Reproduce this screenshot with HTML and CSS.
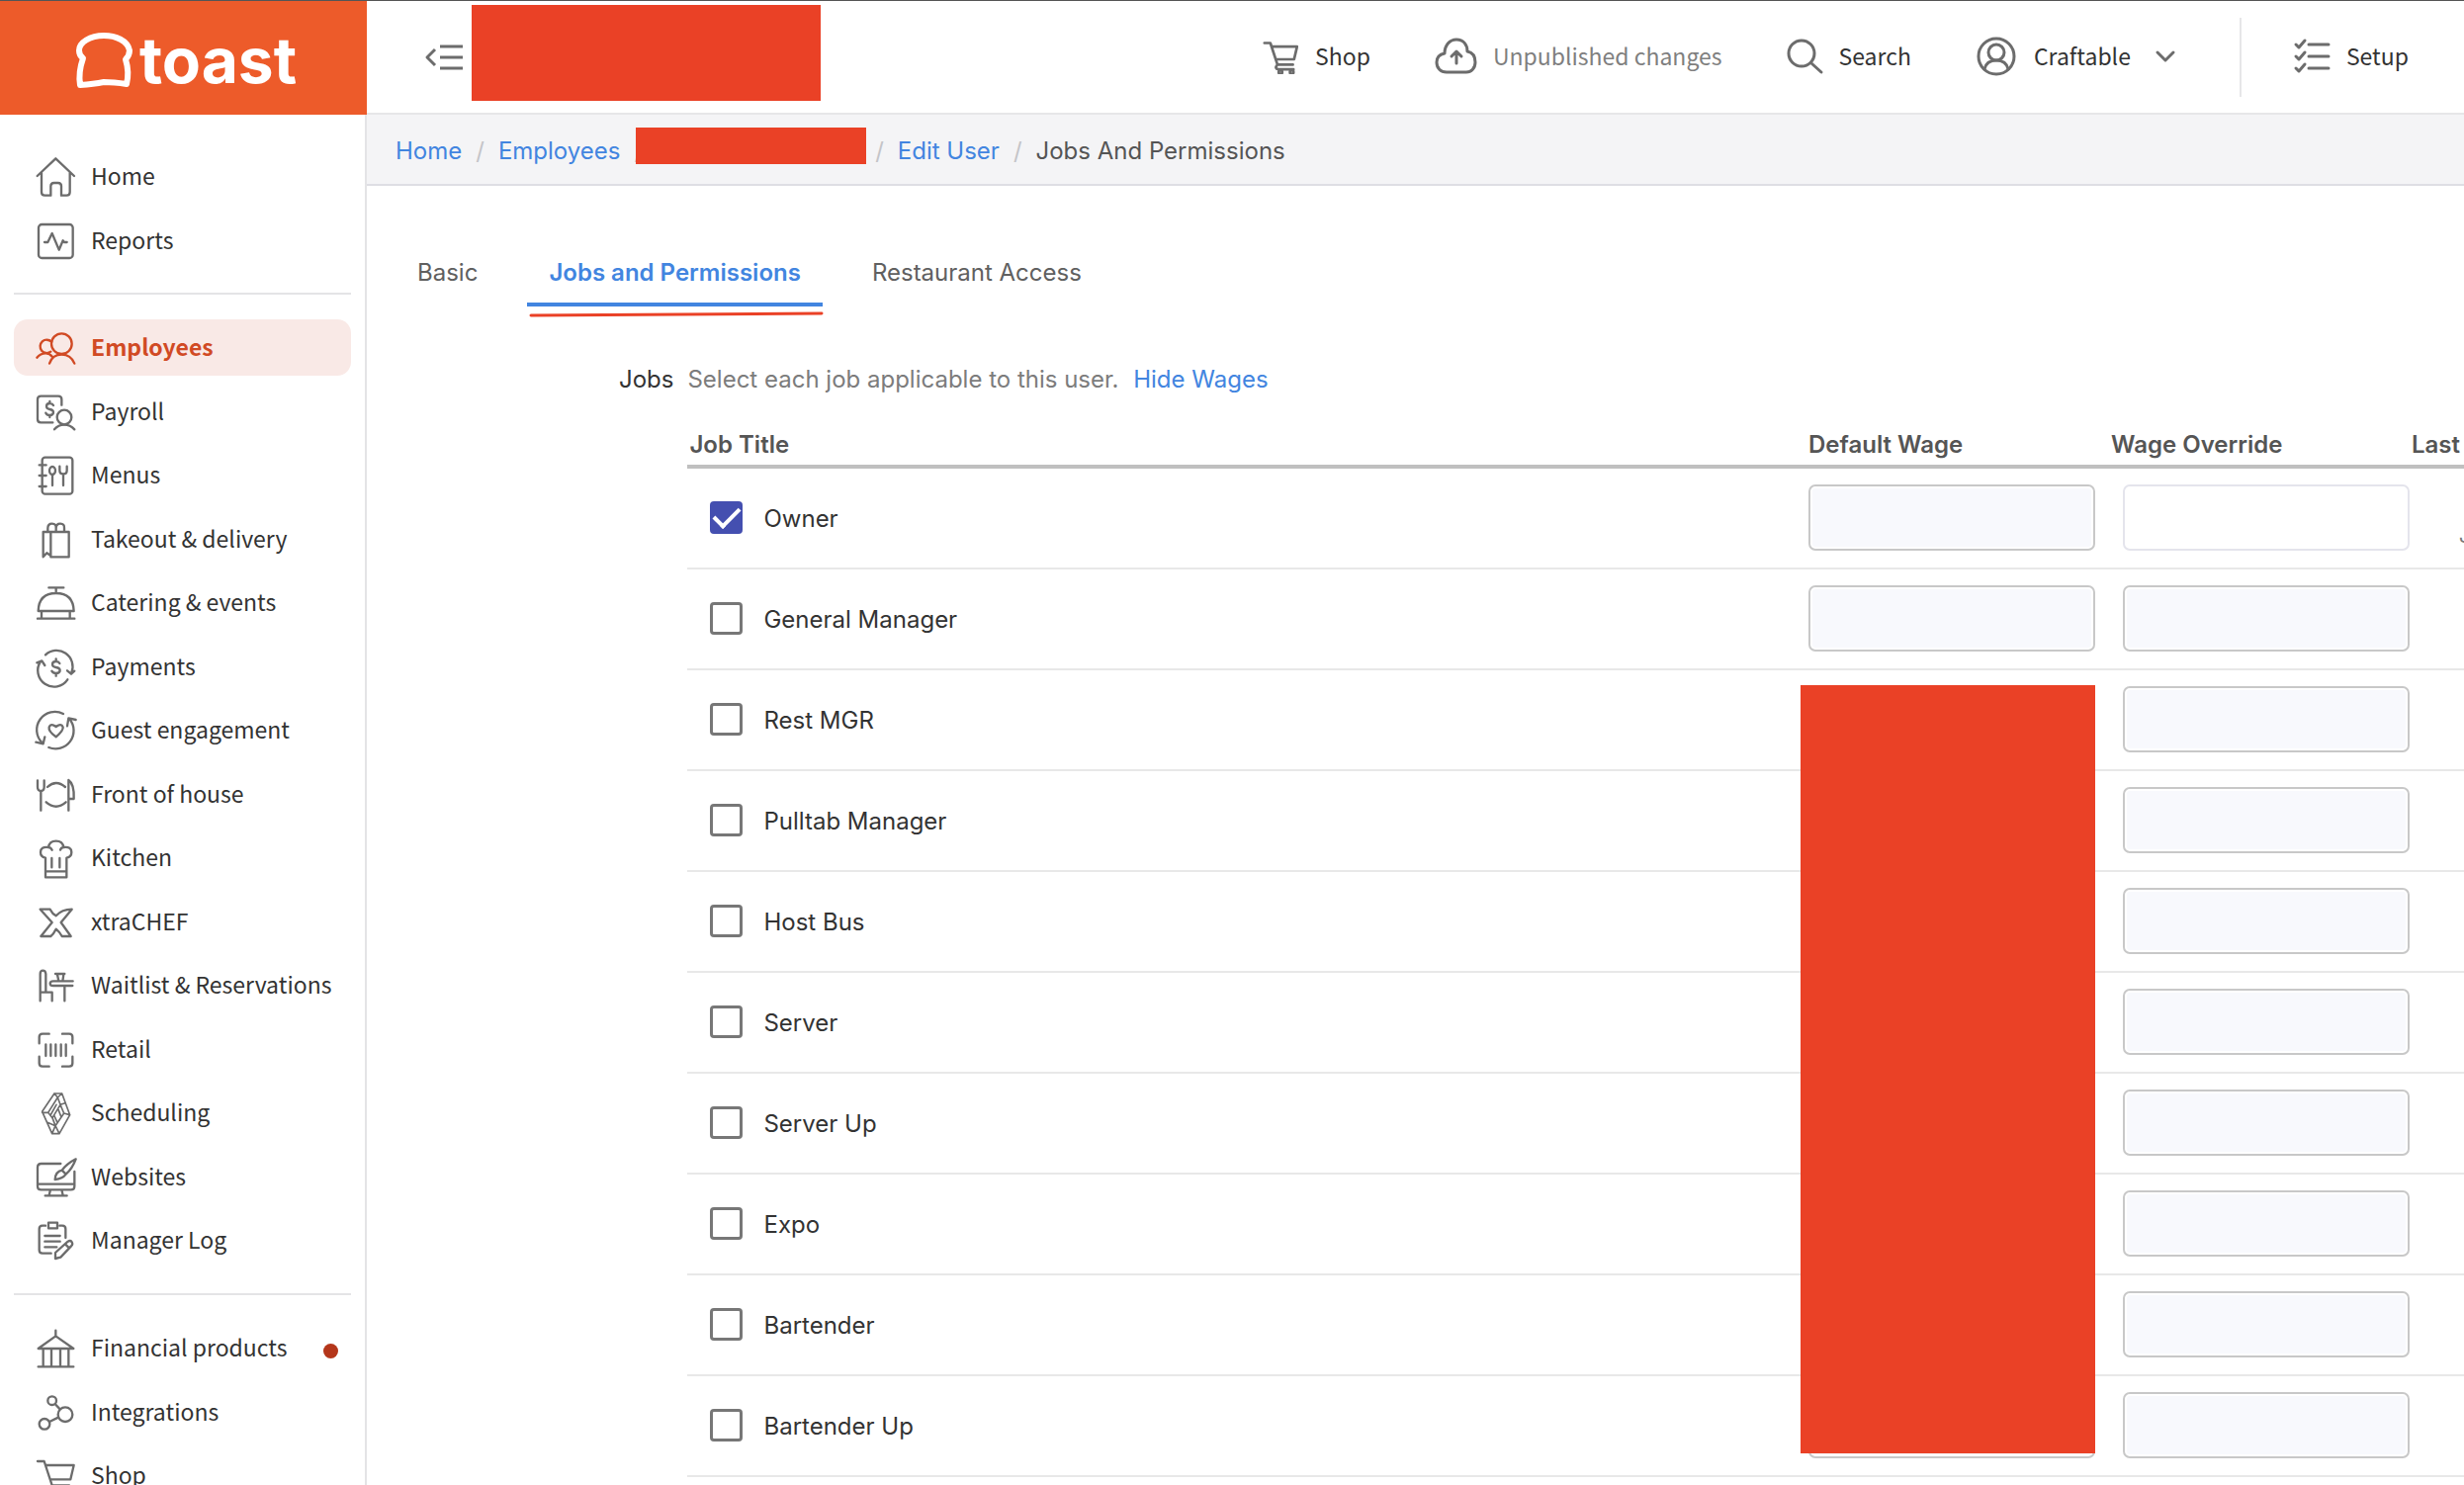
FILE: index.html
```html
<!DOCTYPE html>
<html lang="en">
<head>
<meta charset="utf-8">
<title>Jobs And Permissions</title>
<link rel="stylesheet" href="styles.css">
</head>
<body>
<svg class="sprite" aria-hidden="true">
  <symbol id="cart" viewBox="0 0 120 120"><path d="M6 15H26L50 88H102M33 27H116L106 70H46M50 88q-12 14 4 16H104"/><circle cx="60" cy="113" r="6"/><circle cx="98" cy="113" r="6"/></symbol>
</svg>
<div class="app">
  <aside class="sidebar">
    <a class="brand" href="#" aria-label="Toast home">
      <svg viewBox="0 0 60 60"><path d="M30 5C16 5 5 12 5 20q0 5 4 8Q4 42 6 55q14-1 24-3 10 0 23 2 3-12-1-25 4-4 4-9C54 10 42 5 30 5z"/></svg>
      <span>toast</span>
    </a>
    <nav class="nav" aria-label="Main">
      <ul>
        <li><a href="#"><svg viewBox="0 0 120 120"><path d="M5 57L61 4l56 53M18 48v58q0 10 10 10H46V88q0-10 10-10h12q10 0 10 10v28h16q10 0 10-10V48"/></svg>Home</a></li>
        <li><a href="#"><svg viewBox="0 0 120 120"><rect x="9" y="9" width="104" height="102" rx="10"/><path d="M27 63H37L50 36 71 86 83 58 87 63h8"/></svg>Reports</a></li>
      </ul>
      <ul>
        <li><a class="current" href="#"><svg viewBox="0 0 120 120"><circle cx="79" cy="47" r="31"/><path d="M48 41a20 20 0 1 0-2 30M4 89q10-13 27-13 12 0 20 11M42 107q9-27 37-27t39 27"/></svg>Employees</a></li>
        <li><a href="#"><svg viewBox="0 0 120 120"><path d="M79 38V21q0-10-10-10H16Q6 11 6 21v60q0 10 10 10h36M57 112q12-14 30-14t31 14M54 39q-3-6-11-6-10 0-10 9 0 7 10 9 11 2 11 9 0 9-11 9-9 0-12-7M43 27v6M43 69v6"/><circle cx="87" cy="75" r="22"/></svg>Payroll</a></li>
        <li><a href="#"><svg viewBox="0 0 120 120"><rect x="20" y="5" width="92" height="111" rx="9"/><path d="M11 28h21M11 60h21M11 93h21M51 57v33M73 32v12q0 11 11 11t11-11V32M84 55v35"/><ellipse cx="51" cy="45" rx="9" ry="12"/></svg>Menus</a></li>
        <li><a href="#"><svg viewBox="0 0 120 120"><path d="M23 36H101v76H46V36M23 36v76l11-12 12 8M37 36V25q0-14 13-14t12 14v11M62 36V25q0-14 13-14t12 14v11"/></svg>Takeout &amp; delivery</a></li>
        <li><a href="#"><svg viewBox="0 0 120 120"><path d="M40 13H85M62 13V29M8 84q2-54 54-54t54 54zM18 86v20M104 86v20M6 107H118"/></svg>Catering &amp; events</a></li>
        <li><a href="#"><svg viewBox="0 0 120 120"><path d="M30 22A49 49 0 0 1 109 76M96 70l12 10 10-9M97 97A49 49 0 0 1 15 42M4 46l15-6 9 14M73 48q-3-6-11-6-11 0-11 9 0 7 11 9 12 2 12 9 0 9-12 9-9 0-13-7M62 34v8M62 78v8"/></svg>Payments</a></li>
        <li><a href="#"><svg viewBox="0 0 120 120"><path d="M84 9A55 55 0 0 0 20 97M1 95l22 5 5-21M40 111A55 55 0 0 0 103 25M96 46l4-24 22 5M62 79C46 68 39 58 41 49q5-13 21-1 16-12 21 1 2 11-21 30z"/></svg>Guest engagement</a></li>
        <li><a href="#"><svg viewBox="0 0 120 120"><path d="M6 16v20q0 12 10 12t10-12V16M16 48v59M36 36q26-24 54 0M32 82q30 26 60 0M100 107V15q18 12 16 57H101"/></svg>Front of house</a></li>
        <li><a href="#"><svg viewBox="0 0 120 120"><path d="M30 118V59Q15 56 15 42q0-18 24-15Q42 8 62 8t23 19q24-3 24 15 0 14-15 17v59zM30 100h64M49 60v28M73 60v28M39 27q8 1 11 8M85 27q-8 1-10 8"/></svg>Kitchen</a></li>
        <li><a href="#"><svg viewBox="0 0 120 120"><path d="M14 20H44q7 14 18 20 18-20 48-20L77 60l30 42H80Q72 88 62 80 54 96 46 102H16L50 60z"/></svg>xtraCHEF</a></li>
        <li><a href="#"><svg viewBox="0 0 120 120"><path d="M14 106V24q0-10 8-10t9 10V80M14 80H50v26M113 46H54q-10 0-10 7t10 7h58M88 60v46M60 24H88M66 26l4 20h12l3-20"/></svg>Waitlist &amp; Reservations</a></li>
        <li><a href="#"><svg viewBox="0 0 120 120"><path d="M11 40V21q0-10 10-10H41M81 11h21q10 0 10 10V40M112 80v20q0 10-10 10H81M41 110H21q-10 0-10-10V80M31 43V78M46 43V78M61 43V78M77 43V78M92 43V78"/></svg>Retail</a></li>
        <li><a href="#"><svg viewBox="0 0 120 120" class="fine"><path d="M57 0H80L104 65 72 122H50L20 55zM57 0l10 12L80 0M67 12L38 58H20M67 12l8 22-24 40-13-16M75 34l12-4M51 74l9 24 26-38-11-26M45 66l18-32M60 98l-10 24M60 98l12 24M60 98L36 88M86 60l18 5M66 88l-10-22M78 72L68 46"/></svg>Scheduling</a></li>
        <li><a href="#"><svg viewBox="0 0 120 120"><path d="M76 18H17Q6 18 6 29V86q0 11 11 11h90q11 0 11-11V42M6 80H118M45 97l-4 17M79 97l4 17M29 115H95M122 4Q95 18 80 38l12 12Q112 32 122 4zM80 38Q60 42 59 66q23-2 33-16"/></svg>Websites</a></li>
        <li><a href="#"><svg viewBox="0 0 120 120"><path d="M30 14H21q-10 0-10 10v64q0 10 10 10H47M73 14h8q10 0 10 10v27M28 45H74M28 62H74M28 79H64M60 114V96L98 62q8-5 12 2t-2 12L76 110zM90 70l12 12"/><rect x="39" y="5" width="27" height="17"/></svg>Manager Log</a></li>
      </ul>
      <ul>
        <li><a href="#"><svg viewBox="0 0 120 120"><path d="M61 5V22M8 60L61 22l54 38zM8 115H115M23 60v55M48 60v55M75 60v55M100 60v55"/></svg>Financial products<span class="dot"></span></a></li>
        <li><a href="#"><svg viewBox="0 0 120 120"><circle cx="50" cy="23" r="13"/><circle cx="90" cy="65" r="22"/><circle cx="27" cy="94" r="16"/><path d="M59 33l15 16M42 87l27-13"/></svg>Integrations</a></li>
        <li><a href="#"><svg><use href="#cart"/></svg>Shop</a></li>
      </ul>
    </nav>
  </aside>

  <div class="page">
    <header class="topbar">
      <button class="collapse" type="button" aria-label="Collapse menu"><svg viewBox="0 0 40 30"><path d="M10 7L2 15l8 8M15 4H38M15 15H38M15 26H38"/></svg></button>
      <span class="redaction location"></span>
      <nav class="tools" aria-label="Tools">
        <a href="#"><svg class="i36 bold"><use href="#cart"/></svg>Shop</a>
        <a class="muted" href="#"><svg class="i42" viewBox="0 0 42 42"><path d="M12 37C6 37 2 33 2 27c0-5 3-8 8-9C10 10 15 4 22 4s11 5 11 12c5 1 8 5 8 11 0 6-4 10-9 10zM22 28V17M17 21l5-5 5 5"/></svg>Unpublished changes</a>
        <a href="#"><svg class="i36" viewBox="0 0 36 36"><circle cx="15" cy="15" r="13"/><path d="M25 25l10 9"/></svg>Search</a>
        <button class="account" type="button"><svg class="i42" viewBox="0 0 42 42"><circle cx="21" cy="21" r="18"/><circle cx="21" cy="17" r="8"/><path d="M9 34q2-9 12-9t12 9"/></svg>Craftable<svg class="chev" viewBox="0 0 20 20"><path d="M2 6l8 8 8-8"/></svg></button>
        <a class="setup" href="#"><svg class="i36" viewBox="0 0 36 36"><path d="M2 6l3 3 6-7M2 18l3 3 6-7M2 30l3 3 6-7M15 6H35M15 18H35M15 30H35"/></svg>Setup</a>
      </nav>
    </header>

    <nav class="crumbs" aria-label="Breadcrumb">
      <a href="#">Home</a><i>/</i><a href="#">Employees</a><i class="tight">/</i><span class="redaction person"></span><i>/</i><a href="#">Edit User</a><i>/</i><span>Jobs And Permissions</span>
    </nav>

    <main class="content">
      <nav class="tabs" aria-label="User sections">
        <a href="#">Basic</a>
        <a class="active" href="#">Jobs and Permissions<svg class="scribble" viewBox="0 0 294 6" preserveAspectRatio="none"><path d="M0 4L294 2"/></svg></a>
        <a href="#">Restaurant Access</a>
      </nav>

      <section class="jobs">
        <h2>Jobs</h2>
        <div class="jobs-body">
          <p>Select each job applicable to this user. <a href="#">Hide Wages</a></p>
          <table>
            <colgroup><col><col class="c-wage"><col class="c-over"><col class="c-last"></colgroup>
            <thead><tr><th>Job Title</th><th>Default Wage</th><th>Wage Override</th><th>Last</th></tr></thead>
            <tbody>
              <tr><td><label><input type="checkbox" checked>Owner</label></td><td><input type="text" aria-label="Owner default wage" disabled></td><td><input type="text" aria-label="Owner wage override"></td><td>J</td></tr>
              <tr><td><label><input type="checkbox">General Manager</label></td><td><input type="text" aria-label="General Manager default wage" disabled></td><td><input type="text" aria-label="General Manager wage override" disabled></td><td></td></tr>
              <tr><td><label><input type="checkbox">Rest MGR</label></td><td><input type="text" aria-label="Rest MGR default wage" disabled><span class="redaction wages"></span></td><td><input type="text" aria-label="Rest MGR wage override" disabled></td><td></td></tr>
              <tr><td><label><input type="checkbox">Pulltab Manager</label></td><td><input type="text" aria-label="Pulltab Manager default wage" disabled></td><td><input type="text" aria-label="Pulltab Manager wage override" disabled></td><td></td></tr>
              <tr><td><label><input type="checkbox">Host Bus</label></td><td><input type="text" aria-label="Host Bus default wage" disabled></td><td><input type="text" aria-label="Host Bus wage override" disabled></td><td></td></tr>
              <tr><td><label><input type="checkbox">Server</label></td><td><input type="text" aria-label="Server default wage" disabled></td><td><input type="text" aria-label="Server wage override" disabled></td><td></td></tr>
              <tr><td><label><input type="checkbox">Server Up</label></td><td><input type="text" aria-label="Server Up default wage" disabled></td><td><input type="text" aria-label="Server Up wage override" disabled></td><td></td></tr>
              <tr><td><label><input type="checkbox">Expo</label></td><td><input type="text" aria-label="Expo default wage" disabled></td><td><input type="text" aria-label="Expo wage override" disabled></td><td></td></tr>
              <tr><td><label><input type="checkbox">Bartender</label></td><td><input type="text" aria-label="Bartender default wage" disabled></td><td><input type="text" aria-label="Bartender wage override" disabled></td><td></td></tr>
              <tr><td><label><input type="checkbox">Bartender Up</label></td><td><input type="text" aria-label="Bartender Up default wage" disabled></td><td><input type="text" aria-label="Bartender Up wage override" disabled></td><td></td></tr>
            </tbody>
          </table>
        </div>
      </section>
    </main>
  </div>
</div>
</body>
</html>
```
FILE: styles.css
```css
* { box-sizing: border-box; }
body { margin: 0; background: #fff; color: #333; font-family: Inter, sans-serif; font-size: 24px; line-height: 32px; }
a { color: inherit; text-decoration: none; }
button { border: 0; padding: 0; background: none; color: inherit; font: inherit; }
svg { fill: none; stroke: #6c6c6c; stroke-width: 2; stroke-linecap: round; stroke-linejoin: round; overflow: visible; flex: none; }
.sprite { position: absolute; width: 0; height: 0; }
.app { display: grid; grid-template-columns: 371px minmax(0, 1fr); height: 100vh; overflow: hidden; border-top: 1px solid #555; }
.redaction { display: block; flex: none; background: #ea4126; }

/* Sidebar */
.sidebar, .topbar { font-family: "Noto Sans CJK SC", sans-serif; font-size: 23px; line-height: 34px; }
.sidebar { display: flex; flex-direction: column; }
.brand { display: flex; align-items: center; gap: 6px; height: 115px; padding: 5px 0 0 75px; background: #ed5b2a; color: #fff; font: 700 64px/72px Inter, sans-serif; }
.brand svg { width: 60px; height: 60px; stroke: #fff; stroke-width: 6; }
.nav { flex: 1; min-height: 0; padding: 34px 14px 0; border-right: 2px solid #e4e4e6; }
.nav ul { margin: 0; padding: 0; list-style: none; }
.nav ul + ul { margin-top: 17px; padding-top: 25px; border-top: 2px solid #e4e4e6; }
.nav li { padding-bottom: 8px; }
.nav li:nth-child(even) { padding-bottom: 7px; }
.nav a { display: flex; align-items: center; gap: 16px; height: 57px; padding: 0 0 4px 22px; border-radius: 14px; white-space: nowrap; }
.nav svg { width: 40px; height: 40px; margin-top: 4px; stroke-width: 7; }
.nav .fine { stroke-width: 5; }
.nav .current { background: #f9e9e6; color: #d14a24; font-weight: 700; }
.current svg { stroke: #d14a24; }
.dot { width: 15px; height: 15px; margin: 10px 13px 0 auto; border-radius: 50%; background: #b4361a; }

/* Top bar */
.page { min-width: 0; }
.topbar { display: flex; align-items: center; height: 115px; padding: 0 56px 0 59px; border-bottom: 2px solid #e6e6e8; }
.collapse { display: flex; margin-right: 7px; }
.collapse svg { width: 40px; height: 30px; stroke-width: 3; stroke-linecap: butt; }
.location { align-self: flex-start; width: 353px; height: 97px; margin-top: 4px; }
.tools { display: flex; align-items: center; gap: 65px; margin-left: auto; white-space: nowrap; }
.tools a, .account { display: flex; align-items: center; gap: 17px; padding-bottom: 4px; }
.tools svg { margin-top: 3px; stroke-width: 3; }
.i36 { width: 36px; height: 36px; }
.i42 { width: 42px; height: 42px; }
.tools .bold { stroke-width: 9; }
.tools .chev { width: 20px; height: 20px; margin-left: 8px; }
.muted { color: #7f7f7f; }
.tools .setup { height: 80px; padding-left: 53px; border-left: 2px solid #e6e6e8; }

/* Breadcrumb */
.crumbs { display: flex; align-items: center; gap: 14px; height: 72px; padding: 3px 0 0 29px; background: #f4f4f6; border-bottom: 2px solid #dedee4; color: #555; white-space: nowrap; }
.crumbs a, .jobs p a { color: #4285e0; }
.crumbs i { color: #c4c4c8; font-style: normal; }
.crumbs .tight { margin-right: -21px; }
.person { width: 233px; height: 37px; margin: 0 -5px 11px 0; }

/* Tabs */
.content { padding: 60px 0 0 29px; }
.tabs { display: flex; gap: 28px; color: #606060; }
.tabs a { position: relative; height: 62px; padding: 12px 22px; }
.tabs .active { border-bottom: 4px solid #4285e0; color: #4285e0; font-weight: 600; }
.scribble { position: absolute; left: 4px; top: 67px; width: 294px; height: 6px; stroke: #ea4126; stroke-width: 3; }

/* Jobs table */
.jobs { display: flex; gap: 14px; padding: 58px 0 0 226px; }
.jobs h2 { margin: 0; font-size: 24px; font-weight: 400; }
.jobs-body { flex: 1; min-width: 0; }
.jobs p { margin: 0; color: #7c7c7c; }
.jobs p a { margin-left: 8px; }
table { width: 100%; table-layout: fixed; border-collapse: separate; border-spacing: 0; margin-top: 33px; }
.c-wage { width: 306px; }
.c-over { width: 304px; }
.c-last { width: 53px; }
th { height: 41px; padding: 0 0 4px; border-bottom: 4px solid #c0c0c0; color: #555; font-weight: 600; text-align: left; white-space: nowrap; }
th:first-child { padding-left: 2px; }
td { position: relative; height: 102px; padding: 0; border-bottom: 2px solid #e8e8e8; }
td:nth-child(3) { padding-left: 12px; }
td:last-child { padding: 36px 0 0 48px; overflow: hidden; color: #777; font-size: 20px; line-height: 24px; }
label { display: flex; align-items: center; gap: 21px; padding: 2px 0 0 23px; }
input[type="checkbox"] { appearance: none; display: grid; place-items: center; width: 33px; height: 33px; margin: 0 0 3px; border: 3px solid #777; border-radius: 4px; background: #fff; }
input[type="checkbox"]:checked { border-color: #444fb0; background: #444fb0; }
input[type="checkbox"]:checked::after { content: ""; width: 22px; height: 11px; margin-bottom: 7px; border: solid #fff; border-width: 0 0 4px 4px; transform: rotate(-45deg); }
input[type="text"] { display: block; width: 290px; height: 67px; margin: 0 0 2px; border: 2px solid #e4e4ec; border-radius: 7px; background: #fff; font: inherit; }
input[type="text"]:disabled { border-color: #c8c8c8; background: #f8f9fd; box-shadow: inset 0 0 0 2px #fff; }
.wages { position: absolute; z-index: 1; left: -8px; top: 15px; width: 298px; height: 777px; }
```
